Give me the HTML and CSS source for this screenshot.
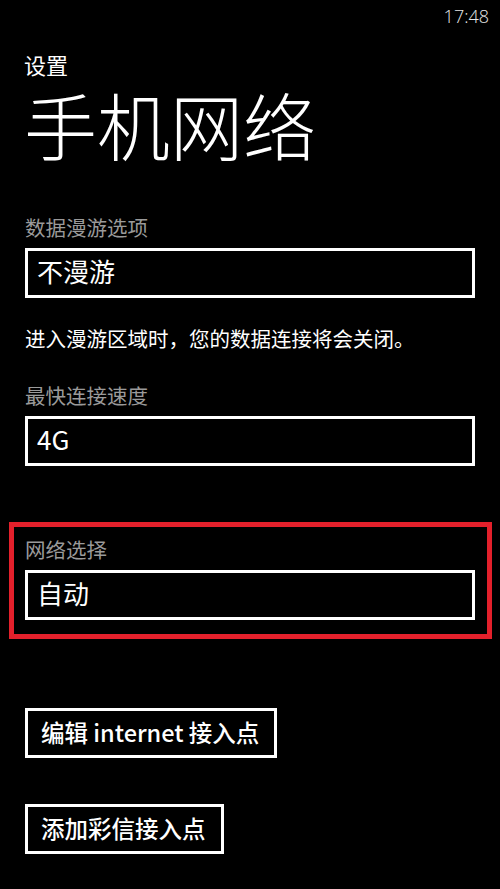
FILE: index.html
```html
<!DOCTYPE html>
<html lang="zh-CN">
<head>
    <meta charset="UTF-8">
    <meta name="viewport" content="width=device-width, initial-scale=1.0">
    <title>手机网络</title>
    <link rel="stylesheet" href="styles.css">
</head>
<body>
    <div id="phone">
        <div class="status-bar">
            <span class="clock">17:48</span>
        </div>
        <div class="header">
            <div class="app-title">设置</div>
            <h1 class="page-title">手机网络</h1>
        </div>
        <div class="settings">
            <div class="field">
                <div class="field-label">数据漫游选项</div>
                <div class="picker">不漫游</div>
            </div>
            <p class="note">进入漫游区域时，您的数据连接将会关闭。</p>
            <div class="field">
                <div class="field-label">最快连接速度</div>
                <div class="picker">4G</div>
            </div>
            <div class="field highlight">
                <div class="field-label">网络选择</div>
                <div class="picker">自动</div>
            </div>
            <div class="actions">
                <button class="btn">编辑 internet 接入点</button>
                <button class="btn">添加彩信接入点</button>
            </div>
        </div>
    </div>
</body>
</html>
```

FILE: styles.css
```css
body {
    margin: 0;
    background-color: #000;
    color: #fff;
    font-family: "Noto Sans CJK SC", "Noto Sans", sans-serif;
}

#phone {
    width: 500px;
    height: 889px;
    overflow: hidden;
}

.status-bar {
    display: flex;
    justify-content: flex-end;
    height: 32px;
    padding-right: 11px;
}

.clock {
    font-family: "Open Sans", "Noto Sans", sans-serif;
    font-size: 18px;
    line-height: 18px;
    margin-top: 7px;
    color: #e6e6e6;
    font-weight: 300;
}

.header {
    padding-left: 24px;
}

.app-title {
    font-size: 22px;
    line-height: 22px;
    margin-top: 21px;
}

.page-title {
    margin: 12px 0 0 0;
    font-size: 73px;
    line-height: 72px;
    font-weight: 200;
}

.settings {
    padding: 0 25px;
    margin-top: 58px;
}

.field-label {
    font-size: 20.5px;
    line-height: 20px;
    color: #9a9a9a;
}

.picker {
    margin-top: 11px;
    border: 3px solid #fff;
    padding: 0 0 6px 9px;
    height: 38px;
    display: flex;
    align-items: center;
    font-size: 26px;
}

.note {
    margin: 30px 0 37px 0;
    font-size: 20.5px;
    line-height: 20px;
}

.field.highlight {
    margin: 56px -17px 0 -16px;
    border: 5px solid #e3202b;
    padding: 12px 12px 14px 11px;
}

.actions {
    display: flex;
    flex-direction: column;
    align-items: flex-start;
    gap: 46px;
    margin-top: 69px;
}

.btn {
    height: 50px;
    border: 3px solid #fff;
    background: none;
    color: #fff;
    font-family: "Noto Sans CJK SC", "Noto Sans", sans-serif;
    font-size: 23.5px;
    font-weight: 500;
    padding: 0 15px 2px 13px;
}
```
